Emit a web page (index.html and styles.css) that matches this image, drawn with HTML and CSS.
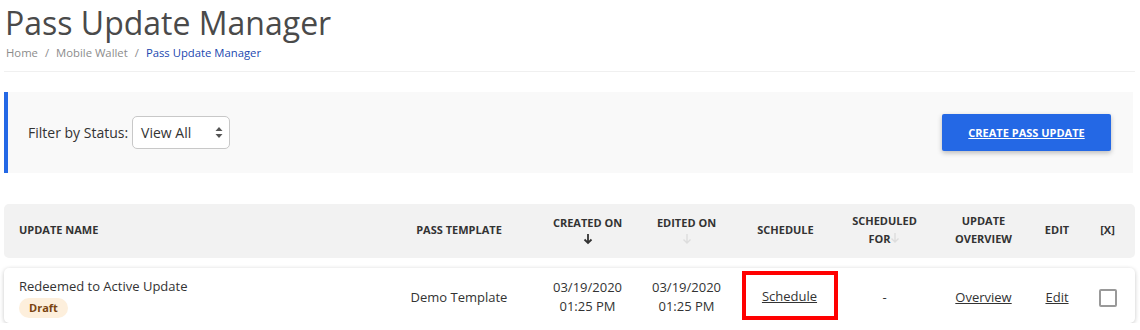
FILE: index.html
```html
<!DOCTYPE html>
<html lang="en">
<head>
    <meta charset="UTF-8">
    <title>Pass Update Manager</title>
    <link rel="stylesheet" href="styles.css">
</head>
<body>
<div class="page">
    <h1 class="title">Pass Update Manager</h1>
    <div class="crumbs">
        <span>Home</span><span class="sep">/</span><span>Mobile Wallet</span><span class="sep">/</span><span class="current">Pass Update Manager</span>
    </div>
    <hr class="rule">

    <div class="filters">
        <label class="filter-label">Filter by Status:</label>
        <div class="select">
            <span>View All</span>
            <svg width="8" height="13" viewBox="0 0 8 13"><path d="M4 1 L7.5 5 H0.5 Z M4 12 L7.5 8 H0.5 Z" fill="#555"/></svg>
        </div>
        <a class="btn-create" href="#">CREATE PASS UPDATE</a>
    </div>

    <div class="grid head">
        <div class="c left">UPDATE NAME</div>
        <div class="c">PASS TEMPLATE</div>
        <div class="c">CREATED ON<br>
            <svg class="arr" width="10" height="12" viewBox="0 0 10 12"><path d="M5 1 V10 M1.5 6.5 L5 10 L8.5 6.5" stroke="#333" stroke-width="1.8" fill="none"/></svg></div>
        <div class="c">EDITED ON<br>
            <svg class="arr" width="10" height="12" viewBox="0 0 10 12"><path d="M5 1 V10 M1.5 6.5 L5 10 L8.5 6.5" stroke="#ddd" stroke-width="1.4" fill="none"/></svg></div>
        <div class="c">SCHEDULE</div>
        <div class="c">SCHEDULED<br>FOR <svg class="arr-in" width="10" height="12" viewBox="0 0 10 12"><path d="M5 1 V10 M1.5 6.5 L5 10 L8.5 6.5" stroke="#ddd" stroke-width="1.4" fill="none"/></svg></div>
        <div class="c">UPDATE<br>OVERVIEW</div>
        <div class="c">EDIT</div>
        <div class="c">[X]</div>
    </div>

    <div class="grid row">
        <div class="c left">
            <div class="name">Redeemed to Active Update</div>
            <span class="badge">Draft</span>
        </div>
        <div class="c">Demo Template</div>
        <div class="c">03/19/2020<br>01:25 PM</div>
        <div class="c">03/19/2020<br>01:25 PM</div>
        <div class="c"><div class="mark"><a href="#">Schedule</a></div></div>
        <div class="c">-</div>
        <div class="c"><a href="#">Overview</a></div>
        <div class="c"><a href="#">Edit</a></div>
        <div class="c"><span class="check"></span></div>
    </div>
</div>
</body>
</html>
```

FILE: styles.css
```css
* {
    margin: 0;
    padding: 0;
    box-sizing: border-box;
}
body {
    font-family: "Open Sans", "Liberation Sans", sans-serif;
    color: #333;
    background: #fff;
}
.page {
    padding: 0 5px 0 4px;
}
.title {
    font-size: 32px;
    font-weight: 400;
    color: #4a4a4a;
    line-height: 44px;
    margin-top: 1px;
    padding-left: 1px;
}
.crumbs {
    font-size: 11.3px;
    color: #8c8c8c;
    line-height: 16px;
    padding-left: 2px;
}
.crumbs .sep {
    margin: 0 7px;
}
.crumbs .current {
    color: #2148b0;
}
.rule {
    border: 0;
    border-top: 1px solid #f0f0f0;
    margin-top: 10px;
}
.filters {
    margin-top: 20px;
    margin-right: 2px;
    height: 81px;
    background: #f9f9f9;
    border-left: 4px solid #2468e5;
    display: flex;
    align-items: center;
    padding: 0 22px 0 20px;
}
.filter-label {
    font-size: 14px;
    color: #333;
    margin-right: 3px;
}
.select {
    width: 98px;
    height: 33px;
    border: 1px solid #c8c8c8;
    border-radius: 5px;
    background: #fff;
    display: flex;
    align-items: center;
    justify-content: space-between;
    padding: 0 6px 0 8px;
    font-size: 14px;
    color: #333;
    transform: translateX(1px);
}
.btn-create {
    margin-left: auto;
    width: 169px;
    height: 37px;
    background: #2468e5;
    color: #fff;
    font-size: 11px;
    font-weight: 700;
    display: flex;
    align-items: center;
    justify-content: center;
    border-radius: 2px;
    box-shadow: 0 2px 5px rgba(0, 0, 0, 0.25);
    text-decoration: underline;
}
.grid {
    display: grid;
    grid-template-columns: 376px 158px 99px 99px 99px 99px 99px 48px 53px;
    align-items: center;
    border-radius: 5px;
}
.head {
    margin-top: 31px;
    height: 54px;
    background: #f2f2f2;
    font-size: 11px;
    font-weight: 700;
    line-height: 18px;
    color: #333;
}
.head .c {
    margin-top: -3px;
}
.row {
    margin-top: 10px;
    height: 55px;
    background: #fff;
    box-shadow: 0 1px 4px rgba(0, 0, 0, 0.22);
    font-size: 13px;
    line-height: 19px;
    color: #333;
}
.row .c {
    padding-top: 3px;
}
.c {
    text-align: center;
}
.c.left {
    text-align: left;
    padding-left: 15px;
}
.row .c.left {
    padding-top: 3px;
}
.arr {
    display: block;
    margin: 1px auto 0;
}
.arr-in {
    vertical-align: -1px;
    margin-left: -3px;
}
.name {
    line-height: 18px;
}
.badge {
    display: inline-block;
    margin-top: 3px;
    background: #fdefdc;
    color: #7a4410;
    font-size: 11px;
    font-weight: 700;
    line-height: 20px;
    padding: 0 10px;
    border-radius: 10px;
}
.row a {
    color: #333;
    text-decoration: underline;
}
.mark {
    width: 96px;
    height: 49px;
    margin: -3px auto 0;
    border: 4px solid #f00;
    display: flex;
    align-items: center;
    justify-content: center;
    transform: translateX(4px);
    padding-top: 2px;
}
.check {
    display: inline-block;
    width: 18px;
    height: 18px;
    border: 2px solid #999;
    border-radius: 2px;
    vertical-align: middle;
}
```
